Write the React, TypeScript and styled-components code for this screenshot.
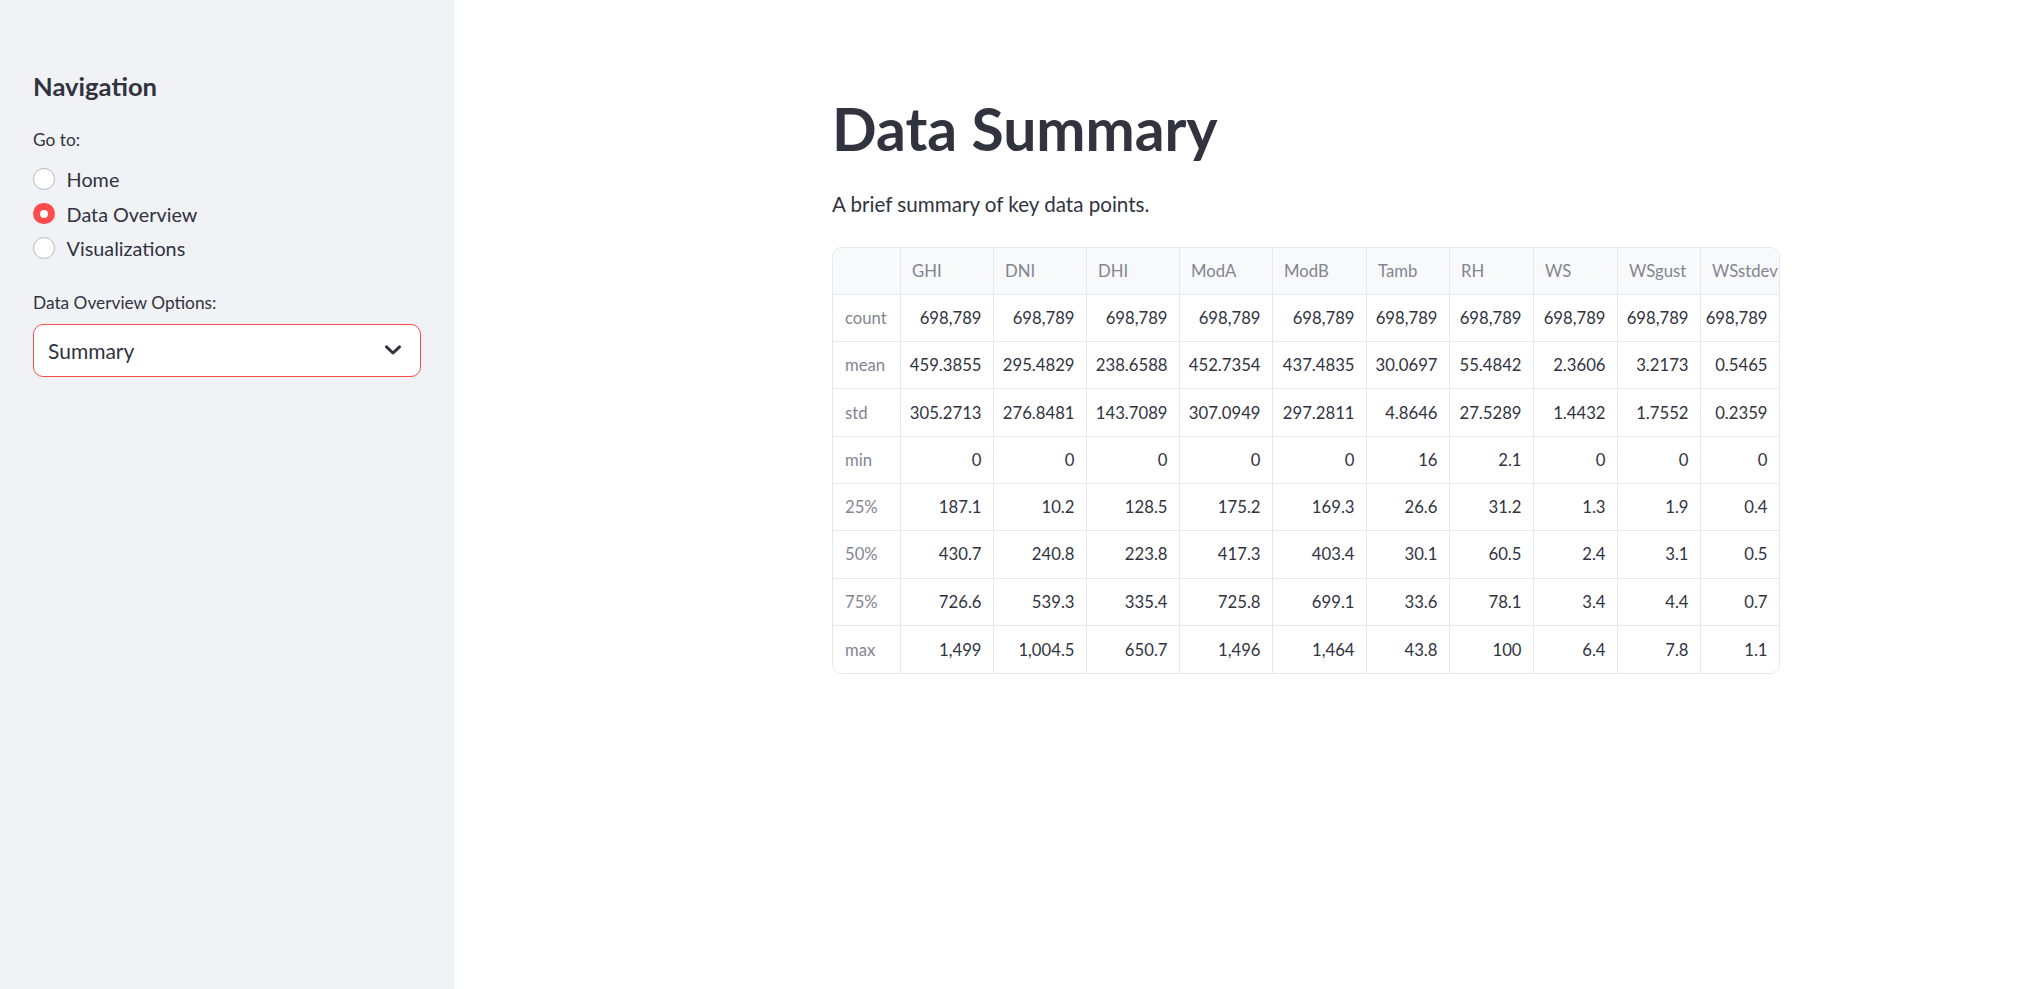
import React from "react";
import styled, { createGlobalStyle } from "styled-components";

const FONT = `Lato, "Liberation Sans", sans-serif`;

const GlobalStyle = createGlobalStyle`
  html, body { margin: 0; padding: 0; background: #ffffff; }
  body { font-family: ${FONT}; color: #31333f; }
  * { box-sizing: border-box; }
`;

const Shell = styled.div`
  display: flex;
  min-height: 989px;
`;

const Sidebar = styled.aside`
  width: 454px;
  flex: none;
  background: #f0f2f6;
  padding: 70px 33px 0 33px;
  display: flex;
  flex-direction: column;
`;

const SideHeading = styled.h2`
  margin: 0;
  font-size: 25.6px;
  line-height: 32.4px;
  font-weight: 700;
  color: #31333f;
`;

const FieldLabel = styled.div<{ $mt: number }>`
  margin-top: ${(p) => p.$mt}px;
  font-size: 17.3px;
  line-height: 30.24px;
  color: #31333f;
`;

const RadioGroup = styled.div`
  margin-top: 6.6px;
  display: flex;
  flex-direction: column;
`;

const RadioRow = styled.label`
  display: flex;
  align-items: center;
  gap: 12px;
  height: 34.56px;
  font-size: 19.8px;
  color: #31333f;
`;

const RadioDot = styled.span<{ $on: boolean }>`
  width: 21.6px;
  height: 21.6px;
  border-radius: 50%;
  flex: none;
  display: flex;
  align-items: center;
  justify-content: center;
  background: ${(p) => (p.$on ? "#ff4b4b" : "#ffffff")};
  border: ${(p) => (p.$on ? "none" : "1.4px solid #b4b6be")};
  &::after {
    content: "";
    display: ${(p) => (p.$on ? "block" : "none")};
    width: 8px;
    height: 8px;
    border-radius: 50%;
    background: #ffffff;
  }
`;

const SelectBox = styled.div`
  margin-top: 6.2px;
  height: 53px;
  background: #ffffff;
  border: 1px solid #ff4b4b;
  border-radius: 10px;
  display: flex;
  align-items: center;
  justify-content: space-between;
  padding: 0 15px 0 14px;
  font-size: 21px;
  color: #31333f;
`;

const Main = styled.main`
  flex: 1;
  padding: 93.5px 0 0 378px;
`;

const Title = styled.h1`
  margin: 0;
  font-size: 58.8px;
  line-height: 70.8px;
  font-weight: 700;
  color: #31333f;
`;

const Lead = styled.p`
  margin: 22.7px 0 0 0;
  font-size: 20.6px;
  line-height: 34.56px;
  color: #31333f;
`;

const TableFrame = styled.div`
  margin-top: 25px;
  width: 948px;
  border: 1px solid #e6e8ed;
  border-radius: 10px;
  overflow: hidden;
`;

const Grid = styled.div`
  display: grid;
  grid-template-columns: 68px 93px 93px 93px 93px 94px 83px 84px 84px 83px 78px;
  grid-auto-rows: 47.3px;
`;

const Cell = styled.div<{ $kind: "corner" | "head" | "index" | "data"; $last: boolean; $lastRow: boolean }>`
  display: flex;
  align-items: center;
  justify-content: ${(p) => (p.$kind === "data" ? "flex-end" : "flex-start")};
  padding: 0 ${(p) => (p.$kind === "data" ? "11.5px" : "0")} 0 ${(p) => (p.$kind === "index" ? "12px" : p.$kind === "data" ? "0" : "11px")};
  font-size: 16.7px;
  white-space: nowrap;
  overflow: hidden;
  background: ${(p) => (p.$kind === "head" || p.$kind === "corner" ? "#f8f9fb" : "#ffffff")};
  color: ${(p) => (p.$kind === "data" ? "#31333f" : "#83858f")};
  border-right: ${(p) => (p.$last ? "none" : "1px solid #e6e8ed")};
  border-bottom: ${(p) => (p.$lastRow ? "none" : "1px solid #e6e8ed")};
`;

const columns = ["GHI", "DNI", "DHI", "ModA", "ModB", "Tamb", "RH", "WS", "WSgust", "WSstdev"];

const rows: [string, string[]][] = [
  ["count", ["698,789", "698,789", "698,789", "698,789", "698,789", "698,789", "698,789", "698,789", "698,789", "698,789"]],
  ["mean", ["459.3855", "295.4829", "238.6588", "452.7354", "437.4835", "30.0697", "55.4842", "2.3606", "3.2173", "0.5465"]],
  ["std", ["305.2713", "276.8481", "143.7089", "307.0949", "297.2811", "4.8646", "27.5289", "1.4432", "1.7552", "0.2359"]],
  ["min", ["0", "0", "0", "0", "0", "16", "2.1", "0", "0", "0"]],
  ["25%", ["187.1", "10.2", "128.5", "175.2", "169.3", "26.6", "31.2", "1.3", "1.9", "0.4"]],
  ["50%", ["430.7", "240.8", "223.8", "417.3", "403.4", "30.1", "60.5", "2.4", "3.1", "0.5"]],
  ["75%", ["726.6", "539.3", "335.4", "725.8", "699.1", "33.6", "78.1", "3.4", "4.4", "0.7"]],
  ["max", ["1,499", "1,004.5", "650.7", "1,496", "1,464", "43.8", "100", "6.4", "7.8", "1.1"]],
];

const Chevron = () => (
  <svg width="24" height="24" viewBox="0 0 24 24" fill="none">
    <path d="M5.5 8.8 L12 15 L18.5 8.8" stroke="#31333f" strokeWidth="3" strokeLinecap="round" strokeLinejoin="round" />
  </svg>
);

export default function App() {
  const options = ["Home", "Data Overview", "Visualizations"];
  const selected = "Data Overview";
  return (
    <>
      <GlobalStyle />
      <Shell>
        <Sidebar>
          <SideHeading>Navigation</SideHeading>
          <FieldLabel $mt={22.5}>Go to:</FieldLabel>
          <RadioGroup>
            {options.map((o) => (
              <RadioRow key={o}>
                <RadioDot $on={o === selected} />
                {o}
              </RadioRow>
            ))}
          </RadioGroup>
          <FieldLabel $mt={22.2}>Data Overview Options:</FieldLabel>
          <SelectBox>
            <span>Summary</span>
            <Chevron />
          </SelectBox>
        </Sidebar>
        <Main>
          <Title>Data Summary</Title>
          <Lead>A brief summary of key data points.</Lead>
          <TableFrame>
            <Grid>
              <Cell $kind="corner" $last={false} $lastRow={false} />
              {columns.map((c, i) => (
                <Cell key={c} $kind="head" $last={i === columns.length - 1} $lastRow={false}>
                  {c}
                </Cell>
              ))}
              {rows.map(([label, vals], r) => (
                <React.Fragment key={label}>
                  <Cell $kind="index" $last={false} $lastRow={r === rows.length - 1}>
                    {label}
                  </Cell>
                  {vals.map((v, i) => (
                    <Cell key={i} $kind="data" $last={i === vals.length - 1} $lastRow={r === rows.length - 1}>
                      {v}
                    </Cell>
                  ))}
                </React.Fragment>
              ))}
            </Grid>
          </TableFrame>
        </Main>
      </Shell>
    </>
  );
}
